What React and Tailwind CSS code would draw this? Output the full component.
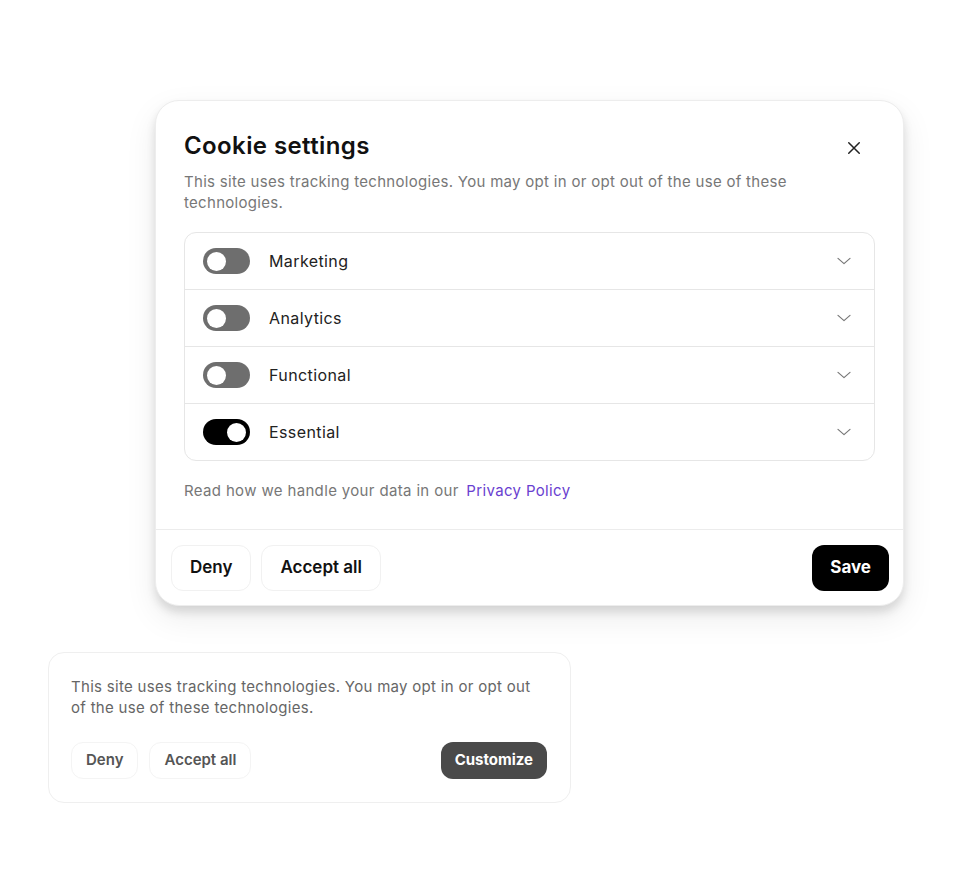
import React, { useState } from 'react';

const font = { fontFamily: 'Inter, "Noto Sans", sans-serif' };

const Toggle = ({ on, onClick }) => (
  <button
    onClick={onClick}
    className={`flex h-[26px] w-[47px] items-center rounded-full px-[4px] ${on ? 'bg-black justify-end' : 'bg-[#6e6e6e] justify-start'}`}
  >
    <span className="block h-[19px] w-[19px] rounded-full bg-white" />
  </button>
);

const Chevron = () => (
  <svg width="18" height="18" viewBox="0 0 24 24" fill="none" stroke="#777" strokeWidth="1.6" strokeLinecap="round" strokeLinejoin="round">
    <path d="M4 8.5l8 7 8-7" />
  </svg>
);

export default function App() {
  const [prefs, setPrefs] = useState({ Marketing: false, Analytics: false, Functional: false, Essential: true });
  const rows = ['Marketing', 'Analytics', 'Functional', 'Essential'];

  return (
    <div className="min-h-[880px] w-[960px] bg-white pt-[100px]" style={font}>
      <div className="ml-[155px] w-[749px] rounded-[24px] border border-[#ededed] bg-white shadow-[0_6px_10px_rgba(0,0,0,0.12),0_12px_32px_rgba(0,0,0,0.08)]">
        <div className="px-[28px] pt-[29px] pb-[28px]">
          <div className="flex items-center justify-between">
            <h2 className="text-[24px] font-semibold leading-[32px] tracking-[0.4px] text-[#111]">Cookie settings</h2>
            <button className="mr-[12px] mt-[4px]">
              <svg width="18" height="18" viewBox="0 0 24 24" fill="none" stroke="#222" strokeWidth="2" strokeLinecap="round">
                <path d="M5 5l14 14M19 5L5 19" />
              </svg>
            </button>
          </div>
          <p className="mt-[9px] pr-[60px] text-[15px] leading-[21px] tracking-[0.3px] text-[#777]">
            This site uses tracking technologies. You may opt in or opt out of the use of these technologies.
          </p>
          <div className="mt-[19px] rounded-[12px] border border-[#e6e6e6]">
            {rows.map((r, i) => (
              <div
                key={r}
                className={`flex items-center justify-between pl-[18px] pr-[21px] ${i > 0 ? 'border-t border-[#e6e6e6]' : ''} ${i === 0 ? 'h-[56px]' : 'h-[57px]'}`}
              >
                <div className="flex items-center gap-[19px]">
                  <Toggle on={prefs[r]} onClick={() => setPrefs({ ...prefs, [r]: !prefs[r] })} />
                  <span className="text-[16px] tracking-[0.4px] text-[#222]">{r}</span>
                </div>
                <Chevron />
              </div>
            ))}
          </div>
          <p className="mt-[19px] text-[15px] leading-[21px] tracking-[0.35px] text-[#777]">
            Read how we handle your data in our <a className="ml-[3px] text-[#6a3fd0]">Privacy Policy</a>
          </p>
        </div>
        <div className="flex items-center justify-between border-t border-[#ececec] pl-[15px] pr-[14px] pt-[15px] pb-[14px]">
          <div className="flex gap-[10px]">
            <button className="h-[46px] rounded-[12px] border border-[#f1f1f1] px-[18px] text-[17px] font-semibold text-[#111]">Deny</button>
            <button className="h-[46px] rounded-[12px] border border-[#f1f1f1] px-[18px] text-[17px] font-semibold text-[#111]">Accept all</button>
          </div>
          <button className="h-[46px] rounded-[12px] bg-black px-[18px] text-[17px] font-bold text-white">Save</button>
        </div>
      </div>

      <div className="ml-[48px] mt-[46px] w-[523px] rounded-[16px] border border-[#efefef] bg-white px-[22px] pt-[23px] pb-[23px]">
        <p className="pr-[10px] text-[15px] leading-[21px] tracking-[0.3px] text-[#666]">
          This site uses tracking technologies. You may opt in or opt out of the use of these technologies.
        </p>
        <div className="mt-[24px] flex items-center justify-between">
          <div className="flex gap-[11px]">
            <button className="h-[37px] rounded-[12px] border border-[#f4f4f4] px-[14px] text-[15px] font-semibold text-[#555]">Deny</button>
            <button className="h-[37px] rounded-[12px] border border-[#f4f4f4] px-[14px] text-[15px] font-semibold text-[#555]">Accept all</button>
          </div>
          <button className="mr-[1px] h-[37px] rounded-[12px] bg-[#4a4a4a] px-[14px] text-[15px] font-bold text-white">Customize</button>
        </div>
      </div>
    </div>
  );
}
